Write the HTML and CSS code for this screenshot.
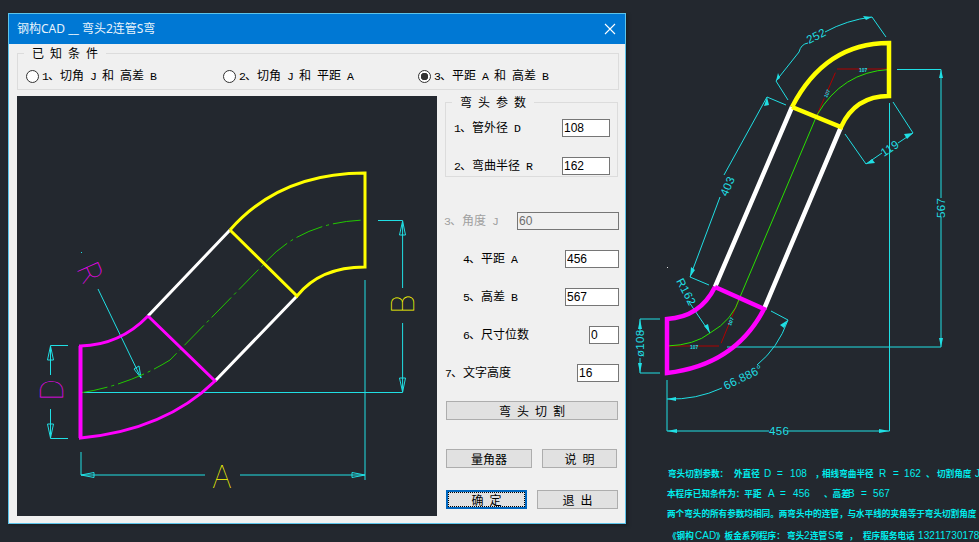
FILE: index.html
```html
<!DOCTYPE html>
<html lang="zh">
<head>
<meta charset="utf-8">
<title>钢构CAD</title>
<link rel="stylesheet" href="styles.css">
</head>
<body>
<main class="stage">
  <section class="window">
    <header class="titlebar">
      <span class="title">钢构CAD __ 弯头2连管S弯</span>
      <svg class="close" viewBox="0 0 12 12"><path d="M1 1L11 11M11 1L1 11"/></svg>
    </header>
    <div class="content">
      <fieldset class="known">
        <legend>已 知 条 件</legend>
        <div class="radios">
          <label class="radio"><input type="radio" name="mode"><span><i class="n">1</i>、切角 <i class="n">J</i> 和 高差 <i class="n">B</i></span></label>
          <label class="radio"><input type="radio" name="mode"><span><i class="n">2</i>、切角 <i class="n">J</i> 和 平距 <i class="n">A</i></span></label>
          <label class="radio"><input type="radio" name="mode" checked><span><i class="n">3</i>、平距 <i class="n">A</i> 和 高差 <i class="n">B</i></span></label>
        </div>
      </fieldset>
      <div class="main">
        <svg class="pane" viewBox="17 96 420 420" fill="none">
          <g stroke="#20dfe4" stroke-width="1">
            <path d="M84 392.5H402.6V323M402.6 288V220.5H378"/>
            <path d="M68 345.5H50.5V375M50.5 409V438.5H68"/>
            <path d="M81 452V475H205M240 475H365M365 280V480"/>
            <path d="M98 289L141 378"/>
            <path d="M50.5 346L47.5 360H53.5ZM50.5 438L47.5 424H53.5ZM81 475L94 472.5V477.5ZM365 475L352 472.5V477.5ZM402.6 221L399.5 235H405.5ZM402.6 392L399.5 378H405.5ZM141 378L134 369L139 366Z"/>
          </g>
          <path class="center-l" d="M80 393Q130 385 170 360L263 265Q300 222 365 220"/>
          <g stroke="#fff" stroke-width="3"><path d="M148 316L230 230M215 381L297 296"/></g>
          <g stroke="#ffff00" stroke-width="3"><path d="M230 230Q280 173 365 173V267Q320 267 297 296L230 230"/></g>
          <g stroke="#ff00ff" stroke-width="3"><path d="M148 316Q120 345 80.5 346V438Q165 430 215 381L148 316"/><path d="M80.5 346V438" stroke-width="4"/></g>
          <rect x="81" y="252" width="1" height="1" fill="#20dfe4"/>
          <text class="big yel" transform="translate(414 314) rotate(-90)">B</text>
          <text class="big mag" transform="translate(63 401) rotate(-90)">D</text>
          <text class="big mag" transform="translate(76 268) rotate(66)">R</text>
          <text class="big yel" x="212" y="488">A</text>
        </svg>
        <aside class="side">
          <fieldset class="params">
            <legend>弯 头 参 数</legend>
            <div class="row"><label><i class="n">1</i>、管外径 <i class="n">D</i></label><input class="w48" value="108"></div>
            <div class="row"><label><i class="n">2</i>、弯曲半径 <i class="n">R</i></label><input class="w48" value="162"></div>
          </fieldset>
          <div class="rows">
            <div class="row off"><label><i class="n">3</i>、角度 <i class="n">J</i></label><input class="w102" value="60" disabled></div>
            <div class="row ind"><label><i class="n">4</i>、平距 <i class="n">A</i></label><input class="w54" value="456"></div>
            <div class="row ind"><label><i class="n">5</i>、高差 <i class="n">B</i></label><input class="w54" value="567"></div>
            <div class="row ind"><label><i class="n">6</i>、尺寸位数</label><input class="w30" value="0"></div>
            <div class="row seven"><label><i class="n">7</i>、文字高度</label><input class="w42" value="16"></div>
          </div>
          <div class="buttons">
            <button class="btn wide">弯 头 切 割</button>
            <div class="btn-row first"><button class="btn b86">量角器</button><button class="btn b75">说 明</button></div>
            <div class="btn-row last"><button class="btn b81 primary"><span>确 定</span></button><button class="btn b81">退 出</button></div>
          </div>
        </aside>
      </div>
    </div>
  </section>
  <svg class="canvas" viewBox="626 0 353 542" fill="none">
    <g stroke="#20dfe4" stroke-width="1">
      <path d="M886 37L872 17Q847 20 825 32M808 43Q801 44 799 52L776 81L788 100"/>
      <path d="M786 105L767 97L724 175M720 197L690 277L709 285"/>
      <path d="M845 134L866 164L882 153M898 143L913 133L893 102"/>
      <path d="M897 69.5H941V198M941 217V347H727"/>
      <path d="M889.5 103V431M667 380V431H769M787 431H889.5"/>
      <path d="M667 399Q696 400 722 388M757 365Q778 348 788 320L771 311"/>
      <path d="M689 302L710 333"/>
      <path d="M660 319H640V333M640 358V373H660"/>
    </g>
    <path fill="#20dfe4" d="M872 17L863 16L866 20ZM776 81L778 73L780 78ZM767 97L764 106L769 105ZM690 277L691 267L695 270ZM866 164L875 163L872 159ZM913 133L904 134L907 139ZM941 69.5L939 78H943ZM941 347L939 338H943ZM667 399L676 397V401ZM788 320L784 328L780 325ZM710 333L704 326L708 324ZM640 319L638 329H642ZM640 373L638 363H642ZM667 431L677 429V433ZM889.5 431L879 429V433Z"/>
    <path stroke="#b00000" stroke-width="1" stroke-dasharray="24 4" d="M889 69H837L817 115M667 346H720L740 297"/>
    <path stroke="#2ae000" stroke-width="1" d="M667 346Q695 345 710 333Q733 320 740 297L817 115Q842 72 889 69.5"/>
    <path stroke="#fff" stroke-width="4.5" d="M792 107L715 287M841 127L764 309"/>
    <path stroke="#ffff00" stroke-width="4.5" d="M792 107Q825 43 889 43V96Q855 96 841 127L792 107"/>
    <path stroke="#ff00ff" stroke-width="4.5" d="M715 287Q700 317 667 319V373Q735 365 764 309L715 287"/>
    <rect x="667" y="267" width="1" height="1" fill="#ddd"/>
    <g class="dim">
      <text transform="translate(809 44) rotate(-27)">252</text>
      <text transform="translate(727 197) rotate(-66)">403</text>
      <text transform="translate(884 157) rotate(-34)">119</text>
      <text transform="translate(945 218) rotate(-90)">567</text>
      <text x="769" y="435">456</text>
      <text transform="translate(726 390) rotate(-26)">66.886°</text>
      <text transform="translate(676 281) rotate(62)">R162</text>
      <text transform="translate(644 357) rotate(-90)">ø108</text>
    </g>
    <g class="tiny">
      <text x="859" y="72">107</text>
      <text transform="translate(827 98) rotate(-66)">107</text>
      <text x="690" y="349">107</text>
      <text transform="translate(731 326) rotate(-70)">107</text>
    </g>
    <text class="note" y="477"><tspan x="668">弯头切割参数：</tspan><tspan x="734">外直径</tspan><tspan class="lat" x="764">D</tspan><tspan class="lat" x="777">=</tspan><tspan class="lat" x="790">108</tspan><tspan x="815">，</tspan><tspan x="822">相线弯曲半径</tspan><tspan class="lat" x="879">R</tspan><tspan class="lat" x="893">=</tspan><tspan class="lat" x="904">162</tspan><tspan x="926">、</tspan><tspan x="937">切割角度</tspan><tspan class="lat" x="975">J</tspan></text>
    <text class="note" y="497"><tspan x="667">本程序已知条件为：平距</tspan><tspan class="lat" x="768">A</tspan><tspan class="lat" x="780">=</tspan><tspan class="lat" x="793">456</tspan><tspan x="824">、高差</tspan><tspan class="lat" x="848">B</tspan><tspan class="lat" x="861">=</tspan><tspan class="lat" x="873">567</tspan></text>
    <text class="note" y="517" x="667">两个弯头的所有参数均相同。两弯头中的连管，与水平线的夹角等于弯头切割角度</text>
    <text class="note" y="539"><tspan x="668">《钢构</tspan><tspan class="lat" x="695">CAD</tspan><tspan x="716">》板金系列程序：</tspan><tspan x="787">弯头</tspan><tspan class="lat" x="804">2</tspan><tspan x="810">连管</tspan><tspan class="lat" x="828">S</tspan><tspan x="835">弯</tspan><tspan x="849">，</tspan><tspan x="863">程序服务电话</tspan><tspan class="lat" x="918">13211730178</tspan></text>
  </svg>
</main>
</body>
</html>
```

FILE: styles.css
```css
* { box-sizing: border-box; }

html, body {
  margin: 0;
  height: 100%;
  background: #23282f;
  overflow: hidden;
}

.stage {
  display: flex;
  align-items: flex-start;
  width: 979px;
  height: 542px;
  overflow: hidden;
}

.window {
  flex: none;
  width: 618px;
  height: 511px;
  margin: 13px 0 0 8px;
  border: 1px solid #5cc4ea;
  background: #f0f0f0;
  box-shadow: 1px 1px 0 #1a1f25, 2px 2px 3px #1a1f25;
  color: #000;
  font: 12px/16px "Noto Sans CJK SC", sans-serif;
  word-spacing: 3.3px;
}

.titlebar {
  display: flex;
  align-items: center;
  justify-content: space-between;
  height: 30px;
  padding: 0 9px 0 8px;
  background: #0078d4;
  color: #e8f3fb;
}

.title {
  font: 12px/16px "Noto Sans", "Noto Sans CJK SC", sans-serif;
  word-spacing: 0;
}

.close {
  width: 12px;
  height: 12px;
  fill: none;
  stroke: #fff;
  stroke-width: 1.1;
}

.content {
  padding: 1px 5px 0 8px;
}

.n {
  font: normal 11.5px/16px "Liberation Mono", monospace;
  letter-spacing: -0.9px;
}

fieldset {
  margin: 0;
  border: 1px solid #dcdcdc;
}

legend {
  line-height: 16px;
  padding: 0 8px;
}

.known {
  height: 45px;
  margin-right: 1px;
  padding: 6px 0 0 8px;
}

.known legend {
  margin-left: -2px;
}

.radios {
  display: grid;
  grid-template-columns: 197px 195px 1fr;
}

.radio {
  display: flex;
  align-items: center;
  gap: 3px;
}

.radio input {
  appearance: none;
  flex: none;
  width: 13px;
  height: 13px;
  margin: 0;
  border: 1px solid #333;
  border-radius: 50%;
  background: #fff;
}

.radio input:checked {
  background: radial-gradient(circle, #333 0 3.5px, #fff 4px);
}

.main {
  display: flex;
  gap: 7px;
  margin-top: 6px;
}

.pane {
  flex: none;
  width: 420px;
  height: 420px;
  background: #23282f;
}

.center-l {
  stroke: #22c800;
  stroke-width: 1;
  stroke-dasharray: 28 4 3 4;
}

.big {
  font: 100 31px "Inter", "Liberation Sans", sans-serif;
  word-spacing: 0;
}

.yel { fill: #ffff00; }
.mag { fill: #ff00ff; }

.side {
  flex: none;
  width: 175px;
  margin-top: -2px;
}

.params {
  height: 83px;
  margin: 0 1px;
  padding: 9px 7px 2px 8px;
  display: flex;
  flex-direction: column;
  gap: 20px;
}

.params legend {
  margin-left: -2px;
}

.rows {
  display: flex;
  flex-direction: column;
  gap: 20px;
  margin-top: 35px;
}

.row {
  display: flex;
  align-items: center;
  justify-content: space-between;
  height: 18px;
}

.row input {
  height: 18px;
  padding: 0 1px;
  border: 1px solid #767676;
  border-radius: 0;
  background: #fff;
  color: #000;
  font: 12px "Liberation Sans", sans-serif;
  outline: none;
}

.row input:disabled {
  background: #f0f0f0;
  color: #6d6d6d;
}

.off {
  color: #a0a0a0;
}

.ind {
  padding-left: 19px;
}

.seven {
  padding-left: 1px;
}

.w30 { width: 30px; }
.w42 { width: 42px; }
.w48 { width: 48px; }
.w54 { width: 54px; }
.w102 { width: 102px; }

.buttons {
  margin: 19px 1px 0 2px;
}

.btn {
  display: block;
  height: 19px;
  padding: 0;
  border: 1px solid #adadad;
  border-radius: 0;
  background: #e1e1e1;
  color: #000;
  font: 12px/1 "Noto Sans CJK SC", sans-serif;
  word-spacing: 3.3px;
}

.wide { width: 172px; }
.b86 { width: 86px; }
.b75 { width: 75px; }
.b81 { width: 81px; }

.btn-row {
  display: flex;
  justify-content: space-between;
}

.first { margin-top: 29px; padding-right: 1px; }
.last { margin-top: 22px; }

.primary {
  border: 2px solid #0067c0;
  padding: 0;
}

.primary span {
  display: flex;
  align-items: center;
  justify-content: center;
  height: 100%;
  border: 1px dotted #000;
}

.canvas {
  flex: none;
  width: 353px;
  height: 542px;
}

.dim text {
  fill: #20dfe4;
  font: 11.5px "Liberation Sans", sans-serif;
  letter-spacing: 0.3px;
}

.tiny text {
  fill: #20dfe4;
  font: bold 5px "Liberation Sans", sans-serif;
}

.note {
  fill: #00eeee;
  font: bold 8.6px "Noto Sans CJK SC", sans-serif;
}

.note .lat {
  font: 10px "Liberation Sans", sans-serif;
  letter-spacing: 0.1px;
}
```
